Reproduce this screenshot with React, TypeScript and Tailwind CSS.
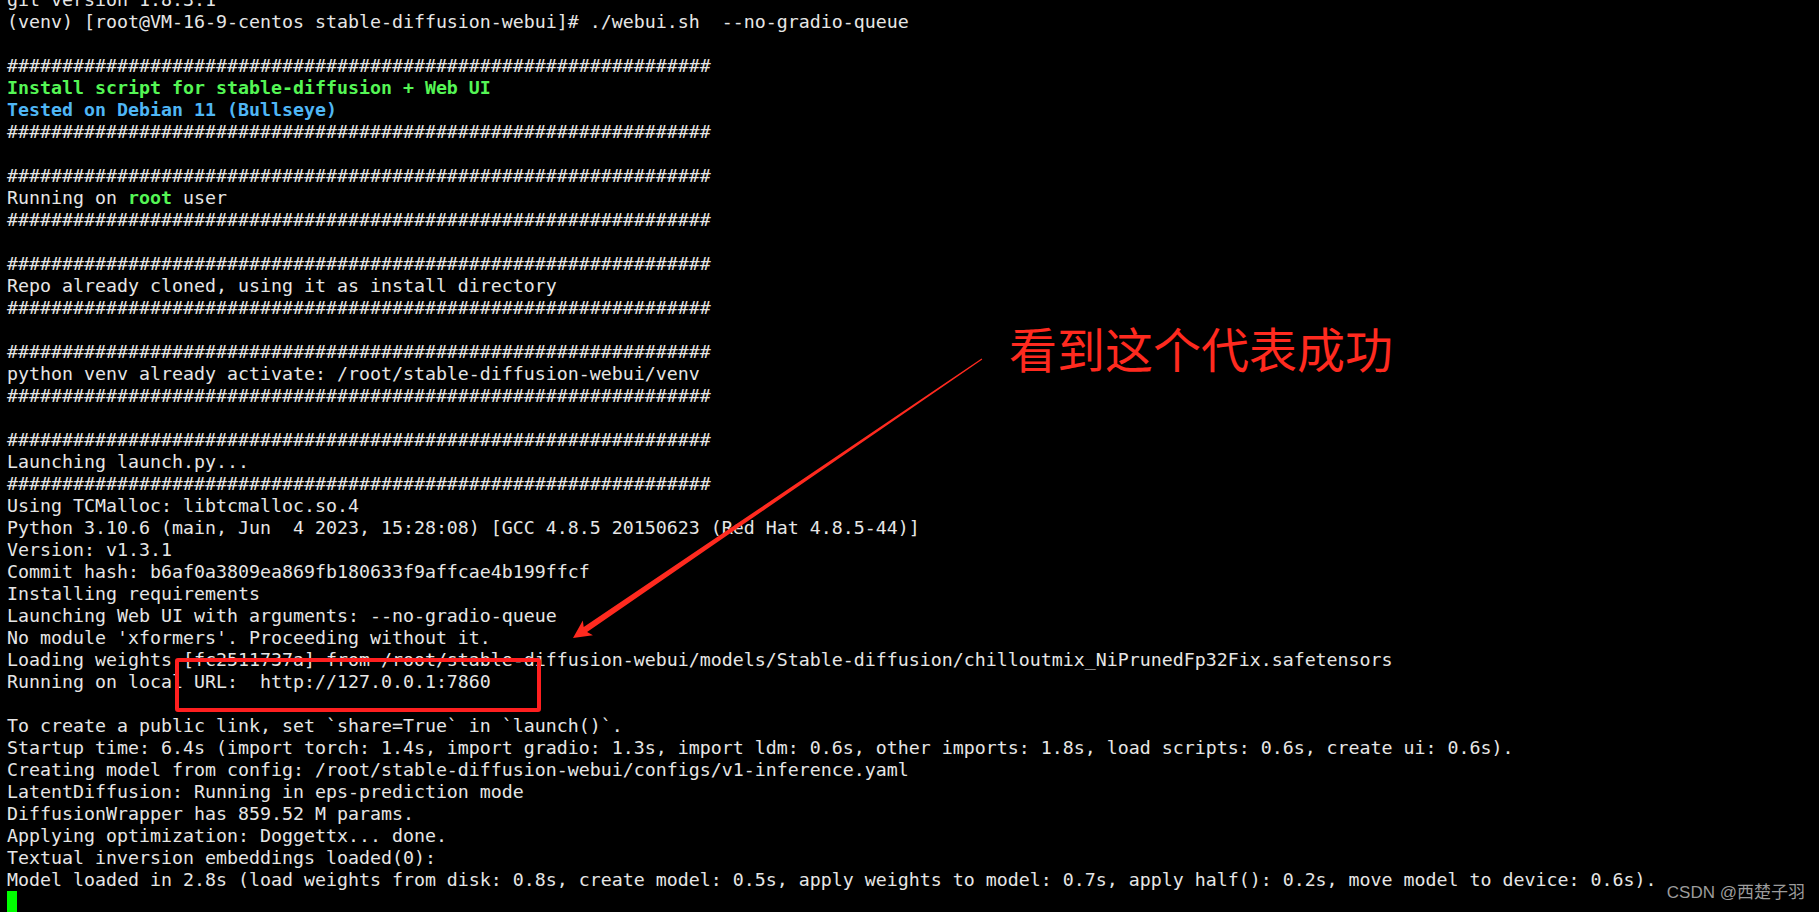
import React from 'react';

type Seg = { t: string; c?: 'green' | 'blue' };
type Line = Seg[];

const HASH = '#'.repeat(64);

const plain = (t: string): Line => [{ t }];

const lines: Line[] = [
  plain('git version 1.8.3.1'),
  plain('(venv) [root@VM-16-9-centos stable-diffusion-webui]# ./webui.sh  --no-gradio-queue'),
  plain(''),
  plain(HASH),
  [{ t: 'Install script for stable-diffusion + Web UI', c: 'green' }],
  [{ t: 'Tested on Debian 11 (Bullseye)', c: 'blue' }],
  plain(HASH),
  plain(''),
  plain(HASH),
  [{ t: 'Running on ' }, { t: 'root', c: 'green' }, { t: ' user' }],
  plain(HASH),
  plain(''),
  plain(HASH),
  plain('Repo already cloned, using it as install directory'),
  plain(HASH),
  plain(''),
  plain(HASH),
  plain('python venv already activate: /root/stable-diffusion-webui/venv'),
  plain(HASH),
  plain(''),
  plain(HASH),
  plain('Launching launch.py...'),
  plain(HASH),
  plain('Using TCMalloc: libtcmalloc.so.4'),
  plain('Python 3.10.6 (main, Jun  4 2023, 15:28:08) [GCC 4.8.5 20150623 (Red Hat 4.8.5-44)]'),
  plain('Version: v1.3.1'),
  plain('Commit hash: b6af0a3809ea869fb180633f9affcae4b199ffcf'),
  plain('Installing requirements'),
  plain('Launching Web UI with arguments: --no-gradio-queue'),
  plain("No module 'xformers'. Proceeding without it."),
  plain('Loading weights [fc2511737a] from /root/stable-diffusion-webui/models/Stable-diffusion/chilloutmix_NiPrunedFp32Fix.safetensors'),
  plain('Running on local URL:  http://127.0.0.1:7860'),
  plain(''),
  plain('To create a public link, set `share=True` in `launch()`.'),
  plain('Startup time: 6.4s (import torch: 1.4s, import gradio: 1.3s, import ldm: 0.6s, other imports: 1.8s, load scripts: 0.6s, create ui: 0.6s).'),
  plain('Creating model from config: /root/stable-diffusion-webui/configs/v1-inference.yaml'),
  plain('LatentDiffusion: Running in eps-prediction mode'),
  plain('DiffusionWrapper has 859.52 M params.'),
  plain('Applying optimization: Doggettx... done.'),
  plain('Textual inversion embeddings loaded(0):'),
  plain('Model loaded in 2.8s (load weights from disk: 0.8s, create model: 0.5s, apply weights to model: 0.7s, apply half(): 0.2s, move model to device: 0.6s).'),
];

const segClass = (c?: Seg['c']) =>
  c === 'green'
    ? 'font-bold text-[#55f655]'
    : c === 'blue'
      ? 'font-bold text-[#4fb6f5]'
      : 'text-[#e6e6e6]';

function Arrow() {
  // tapered red annotation arrow, drawn along +x then rotated into place
  return (
    <svg className="absolute inset-0 pointer-events-none" width={1819} height={912}>
      <g transform="translate(573 638) rotate(-34.3)">
        <polygon
          points="0,0 18,-9 15,-3 495,-0.6 495,0.6 15,3 18,9"
          fill="#ff2a1f"
        />
      </g>
    </svg>
  );
}

export default function App() {
  return (
    <div className="relative w-[1819px] h-[912px] overflow-hidden bg-black">
      <div className="-mt-[11px] pl-[7px] font-['DejaVu_Sans_Mono',monospace] text-[18.28px] leading-[22px] whitespace-pre">
        {lines.map((line, i) => (
          <div key={i} className="h-[22px]">
            {line.map((s, j) => (
              <span key={j} className={segClass(s.c)}>
                {s.t}
              </span>
            ))}
          </div>
        ))}
        <div className="h-[22px] flex">
          <span className="w-[10px] h-[22px] bg-[#00ff00]" />
        </div>
      </div>

      {/* highlight box around the local URL */}
      <div className="absolute left-[175px] top-[658px] w-[366px] h-[54px] border-[4px] border-[#ff1f1f] rounded-[3px]" />

      <Arrow />

      <div className="absolute left-[1009px] top-[323px] font-['Noto_Sans_CJK_SC',sans-serif] text-[48px] leading-[48px] text-[#ff2a1f]">
        看到这个代表成功
      </div>

      <div className="absolute right-[14px] top-[881px] font-['Liberation_Sans','Noto_Sans_CJK_SC',sans-serif] text-[17px] leading-[24px] text-[#9c9c9c]">
        CSDN @西楚子羽
      </div>
    </div>
  );
}
